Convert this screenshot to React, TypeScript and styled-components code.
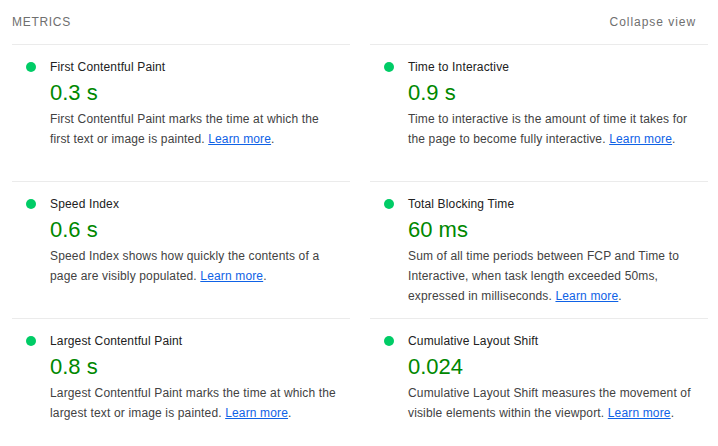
import React from "react";
import styled, { createGlobalStyle } from "styled-components";

const Global = createGlobalStyle`
  html, body { margin: 0; padding: 0; background: #fff; }
  body { font-family: "Liberation Sans", Arial, sans-serif; }
`;

const Page = styled.div`
  width: 718px;
  box-sizing: border-box;
  padding: 0 10px 0 12px;
`;

const Header = styled.div`
  display: flex;
  justify-content: space-between;
  align-items: center;
  height: 44px;
`;

const Label = styled.span`
  font-size: 12px;
  letter-spacing: 0.7px;
  text-transform: uppercase;
  color: #6f6f6f;
`;

const Toggle = styled.span`
  font-size: 12px;
  letter-spacing: 0.95px;
  color: #6f6f6f;
  margin-right: 12px;
`;

const Grid = styled.div`
  display: grid;
  grid-template-columns: 1fr 1fr;
  column-gap: 20px;
  grid-auto-rows: 1fr;
`;

const Metric = styled.div`
  display: flex;
  border-top: 1px solid #ebebeb;
  padding: 12px 12px 12px 0;
`;

const Dot = styled.span`
  flex: none;
  width: 10px;
  height: 10px;
  border-radius: 50%;
  background: #0c6;
  margin: 5px 14px 0 14px;
`;

const Body = styled.div`
  display: flex;
  flex-direction: column;
  min-width: 0;
`;

const Title = styled.div`
  font-size: 12px;
  line-height: 20px;
  letter-spacing: 0.15px;
  color: #212121;
`;

const Value = styled.div`
  font-size: 22px;
  line-height: 32px;
  color: #080;
`;

const Desc = styled.div`
  font-size: 12px;
  line-height: 20px;
  letter-spacing: 0.15px;
  color: #424242;
`;

const Link = styled.a`
  color: #0f62e6;
  text-decoration: underline;
`;

const metrics = [
  {
    title: "First Contentful Paint",
    value: "0.3 s",
    desc: "First Contentful Paint marks the time at which the first text or image is painted.",
  },
  {
    title: "Time to Interactive",
    value: "0.9 s",
    desc: "Time to interactive is the amount of time it takes for the page to become fully interactive.",
  },
  {
    title: "Speed Index",
    value: "0.6 s",
    desc: "Speed Index shows how quickly the contents of a page are visibly populated.",
  },
  {
    title: "Total Blocking Time",
    value: "60 ms",
    desc: "Sum of all time periods between FCP and Time to Interactive, when task length exceeded 50ms, expressed in milliseconds.",
  },
  {
    title: "Largest Contentful Paint",
    value: "0.8 s",
    desc: "Largest Contentful Paint marks the time at which the largest text or image is painted.",
  },
  {
    title: "Cumulative Layout Shift",
    value: "0.024",
    desc: "Cumulative Layout Shift measures the movement of visible elements within the viewport.",
  },
];

export default function App() {
  return (
    <>
      <Global />
      <Page>
        <Header>
          <Label>Metrics</Label>
          <Toggle>Collapse view</Toggle>
        </Header>
        <Grid>
          {metrics.map((m) => (
            <Metric key={m.title}>
              <Dot />
              <Body>
                <Title>{m.title}</Title>
                <Value>{m.value}</Value>
                <Desc>
                  {m.desc} <Link href="#">Learn more</Link>.
                </Desc>
              </Body>
            </Metric>
          ))}
        </Grid>
      </Page>
    </>
  );
}
